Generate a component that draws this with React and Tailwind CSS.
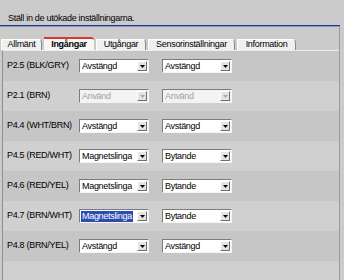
const rows = [
  { label: "P2.5 (BLK/GRY)", a: "Avstängd", b: "Avstängd" },
  { label: "P2.1 (BRN)", a: "Använd", b: "Använd", disabled: true },
  { label: "P4.4 (WHT/BRN)", a: "Avstängd", b: "Avstängd" },
  { label: "P4.5 (RED/WHT)", a: "Magnetslinga", b: "Bytande" },
  { label: "P4.6 (RED/YEL)", a: "Magnetslinga", b: "Bytande" },
  { label: "P4.7 (BRN/WHT)", a: "Magnetslinga", b: "Bytande", selected: true },
  { label: "P4.8 (BRN/YEL)", a: "Avstängd", b: "Avstängd" },
];

const tabs = [
  { name: "Allmänt", w: "w-[41px]" },
  { name: "Ingångar", w: "w-[50px]", active: true },
  { name: "Utgångar", w: "w-[50px]" },
  { name: "Sensorinställningar", w: "w-[87px]" },
  { name: "Information", w: "w-[59px]" },
];

function Combo({ value, disabled, selected }) {
  return (
    <div
      className={`flex h-[14px] w-[70px] items-center border-t border-l border-[#7c7c7c] border-r border-b border-r-[#f4f4f4] border-b-[#f4f4f4] ${
        disabled ? "bg-[#f3f3f3]" : "bg-white"
      }`}
    >
      <div className="flex h-full flex-1 items-center pl-[1px]">
        <span
          className={`px-[1px] leading-[11px] ${
            selected ? "bg-[#2d4bb0] text-white" : disabled ? "text-[#a0a0a0]" : "text-black"
          }`}
        >
          {value}
        </span>
      </div>
      <div className="mr-[1px] flex h-[10px] w-[10px] items-center justify-center border border-t-white border-l-white border-r-[#6e6e6e] border-b-[#6e6e6e] bg-[#e4e4e4]">
        <svg width="5" height="3" viewBox="0 0 5 3">
          <path d="M0 0h5L2.5 3z" fill={disabled ? "#a8a8a8" : "#000"} />
        </svg>
      </div>
    </div>
  );
}

export default function App() {
  return (
    <div
      className="h-[280px] w-[344px] overflow-hidden bg-[#cbcbcb] text-[9px] tracking-[-0.3px] text-black"
      style={{ fontFamily: '"Liberation Sans", Arial, sans-serif' }}
    >
      <div className="w-[340px]">
        <div className="flex h-[25px] items-end pl-[8px]">Ställ in de utökade inställningarna.</div>
        <div className="h-[1px] bg-[#1f3b8e]" />
        <div className="h-[1px] bg-[#8797c4]" />
      </div>
      <div className="h-[253px] w-[340px] border-r border-[#9b9b9b]">
        <div className="flex h-[23px] items-end gap-[2px] pl-[1px]">
          {tabs.map((t) =>
            t.active ? (
              <div
                key={t.name}
                className={`${t.w} flex h-[13px] items-center justify-center rounded-tr-[3px] border-t-2 border-[#d8382a] bg-[#f7f7f7] font-bold`}
              >
                {t.name}
              </div>
            ) : (
              <div
                key={t.name}
                className={`${t.w} flex h-[11px] items-center justify-center rounded-tr-[4px] border-l border-t border-white border-r border-r-[#8a8a8a] bg-[#f0f0f0]`}
              >
                {t.name}
              </div>
            )
          )}
        </div>
        <div className="ml-[2px] h-[230px] border-t border-l border-[#ececec] border-l-[#8f8f8f] bg-[#d0d0d0]">
          {rows.map((r, i) => (
            <div
              key={r.label}
              className={`flex h-[30px] items-center pl-[4px] ${i % 2 === 0 ? "bg-[#c6c6c6]" : "bg-[#d0d0d0]"}`}
            >
              <div className="w-[72px]">{r.label}</div>
              <Combo value={r.a} disabled={r.disabled} selected={r.selected} />
              <div className="w-[13px]" />
              <Combo value={r.b} disabled={r.disabled} />
            </div>
          ))}
        </div>
      </div>
    </div>
  );
}
